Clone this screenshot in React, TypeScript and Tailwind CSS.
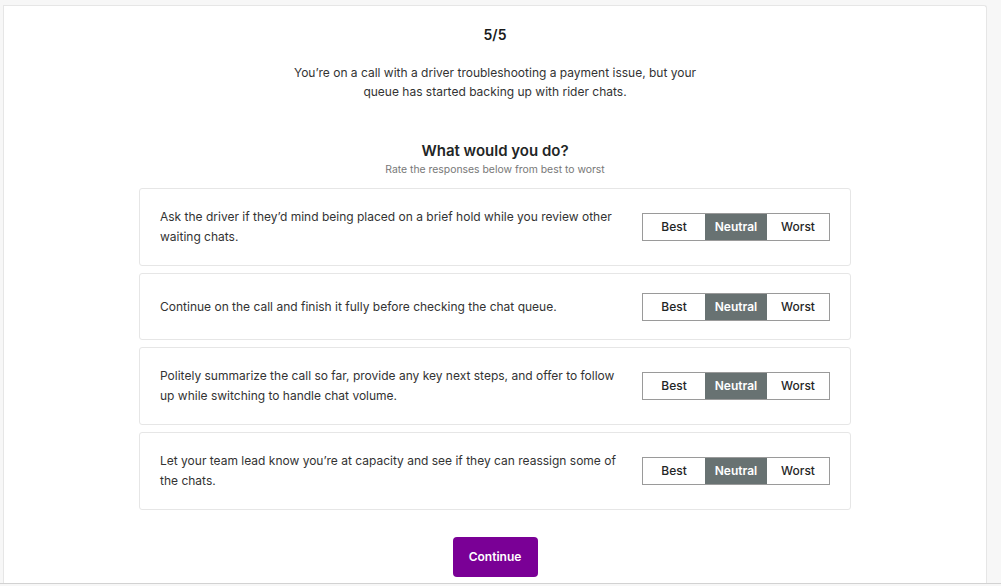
import { useState } from "react";

const options = [
  "Ask the driver if they’d mind being placed on a brief hold while you review other waiting chats.",
  "Continue on the call and finish it fully before checking the chat queue.",
  "Politely summarize the call so far, provide any key next steps, and offer to follow up while switching to handle chat volume.",
  "Let your team lead know you’re at capacity and see if they can reassign some of the chats.",
];

const choices = ["Best", "Neutral", "Worst"];

function RatingRow({ text, tall }: { text: string; tall: boolean }) {
  const [value, setValue] = useState("Neutral");
  return (
    <div
      className={`flex items-center rounded-[3px] border border-[#e6e6e6] bg-white pl-5 pr-5 ${
        tall ? "h-[78px]" : "h-[67px]"
      }`}
    >
      <p className="max-w-[462px] text-[12px] leading-5 text-[#333]">{text}</p>
      <div className="ml-auto flex h-[28px] border border-[#9a9a9a]">
        {choices.map((c) => (
          <button
            key={c}
            onClick={() => setValue(c)}
            className={`w-[62px] text-[12px] ${
              value === c ? "bg-[#687272] font-semibold text-white" : "bg-white font-medium text-[#1f2626]"
            }`}
          >
            {c}
          </button>
        ))}
      </div>
    </div>
  );
}

export default function App() {
  return (
    <div className="h-[586px] bg-[#f7f7f7] font-['Inter',sans-serif]">
      <div className="h-[584px] border-b border-[#d2d2d2] pl-[3px] pr-[14px] pt-[5px]">
        <div className="flex h-full flex-col items-center rounded-tr-[3px] border border-b-0 border-[#e6e6e6] bg-white pt-[19px]">
          <h2 className="text-[14px] font-semibold leading-5 text-[#1a1a1a]">5/5</h2>
          <p className="mt-[18px] max-w-[420px] text-center text-[12px] leading-[19px] text-[#333]">
            You’re on a call with a driver troubleshooting a payment issue, but your queue has started backing up with
            rider chats.
          </p>
          <h3 className="mt-[39px] text-[15px] font-semibold leading-[22px] text-[#1f2626]">What would you do?</h3>
          <p className="mt-[1px] text-[10.4px] leading-[14px] text-[#777]">Rate the responses below from best to worst</p>
          <div className="mt-[11px] flex w-[712px] flex-col gap-[7px]">
            {options.map((o, i) => (
              <RatingRow key={i} text={o} tall={i !== 1} />
            ))}
          </div>
          <button className="mt-[27px] h-[40px] w-[85px] rounded-[4px] bg-[#7a0096] text-[12px] font-semibold text-white">
            Continue
          </button>
        </div>
      </div>
    </div>
  );
}
